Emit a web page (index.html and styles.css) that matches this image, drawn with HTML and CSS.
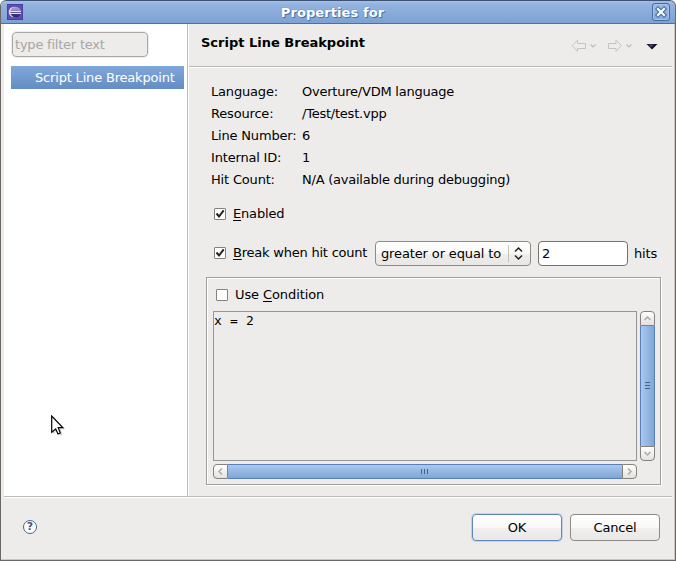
FILE: index.html
```
<!DOCTYPE html>
<html lang="en">
<head>
<meta charset="utf-8">
<title>Properties for</title>
<link rel="stylesheet" href="styles.css">
</head>
<body>
<div class="window">
  <header class="titlebar">
    <svg class="app-icon" width="16" height="16" viewBox="0 0 16 16">
      <defs><linearGradient id="orb" x1="0" y1="0" x2="0" y2="1"><stop offset="0" stop-color="#aaa2cf"/><stop offset=".45" stop-color="#8a84b8"/><stop offset=".6" stop-color="#453a80"/><stop offset="1" stop-color="#2c2260"/></linearGradient></defs>
      <rect x=".5" y=".5" width="15" height="15" fill="#5d4db4" stroke="#4c3ea2"/>
      <circle cx="7" cy="8" r="5.300" fill="#dccfe0"/>
      <circle cx="8.700" cy="8" r="5.300" fill="url(#orb)"/>
      <path d="M3 7.500h11M3 9.500h11" stroke="#dfe0f2"/>
    </svg>
    <h1 class="title"><span>Properties for</span></h1>
    <button class="close" aria-label="Close"><svg width="12" height="12" viewBox="0 0 12 12"><path d="M3 3l6 6M9 3l-6 6" stroke="#3d6296" stroke-width="4.2" stroke-linecap="square"/><path d="M3 3l6 6M9 3l-6 6" stroke="#f4f7fc" stroke-width="2.3" stroke-linecap="square"/></svg></button>
  </header>
  <main class="body">
    <nav class="side">
      <input class="filter" placeholder="type filter text" aria-label="Filter">
      <div class="item"><span>Script Line Breakpoint</span></div>
    </nav>
    <section class="page">
      <div class="page-head">
        <h2><span>Script Line Breakpoint</span></h2>
        <svg width="90" height="14" viewBox="0 0 90 14" fill="none">
          <path d="M1.200 6.500L6.500 1.200V4.500H14.500V9.500H6.500V12.300Z" stroke="#c3c3c1"/>
          <path d="M19.500 5.500l2.500 2.500L24.500 5.500" stroke="#bbb" stroke-width="1.200"/>
          <path d="M50.300 6.500L45 1.200V4.500H37.500V9.500H45V12.300Z" stroke="#c3c3c1"/>
          <path d="M55.500 5.500l2.500 2.500L60.500 5.500" stroke="#bbb" stroke-width="1.200"/>
          <path d="M75.500 5H86.500L81 10.500Z" fill="#111022"/><path d="M77.500 5.500H83L80 8.500Z" fill="#4b3f78"/>
        </svg>
      </div>
      <div class="content">
        <dl class="facts">
          <dt>Language:</dt><dd>Overture/VDM language</dd>
          <dt>Resource:</dt><dd>/Test/test.vpp</dd>
          <dt>Line Number:</dt><dd>6</dd>
          <dt>Internal ID:</dt><dd>1</dd>
          <dt>Hit Count:</dt><dd>N/A (available during debugging)</dd>
        </dl>
        <div class="row enabled">
          <span class="check"><svg width="10" height="10" viewBox="1 1 10 10"><path d="M2.500 5.500L5 8.500L9.700 2.300" fill="none" stroke="#222" stroke-width="2"/></svg></span>
          <span><u>E</u>nabled</span>
        </div>
        <div class="row hitrow">
          <div class="row hitcheck">
            <span class="check"><svg width="10" height="10" viewBox="1 1 10 10"><path d="M2.500 5.500L5 8.500L9.700 2.300" fill="none" stroke="#222" stroke-width="2"/></svg></span>
            <span class="break-label"><u>B</u>reak when hit count</span>
          </div>
          <div class="combo"><span>greater or equal to</span><svg width="22" height="17" viewBox="0 0 22 17" fill="none"><path d="M.5 0V17" stroke="#c4c2bf"/><path d="M7 6.500L10.500 3L14 6.500M7 10.500L10.500 14L14 10.500" stroke="#222" stroke-width="1.500"/></svg></div>
          <input class="count" value="2" aria-label="Hit count">
          <span>hits</span>
        </div>
        <div class="group">
          <div class="row condition"><span class="check"></span><span>Use <u>C</u>ondition</span></div>
          <div class="editor">
            <div class="code">x = 2</div>
            <div class="bar vertical">
              <span class="arrow"><svg width="9" height="9" viewBox="0 0 9 9"><path d="M1.500 6L4.500 3L7.500 6"/></svg></span>
              <span class="thumb"><i></i><i></i><i></i></span>
              <span class="arrow"><svg width="9" height="9" viewBox="0 0 9 9"><path d="M1.500 3L4.500 6L7.500 3"/></svg></span>
            </div>
            <div class="bar horizontal">
              <span class="arrow"><svg width="9" height="9" viewBox="0 0 9 9"><path d="M6 1.500L3 4.500L6 7.500"/></svg></span>
              <span class="thumb"><i></i><i></i><i></i></span>
              <span class="arrow"><svg width="9" height="9" viewBox="0 0 9 9"><path d="M3 1.500L6 4.500L3 7.500"/></svg></span>
            </div>
          </div>
        </div>
      </div>
    </section>
  </main>
  <footer class="footer">
    <span class="help">?</span>
    <button class="btn primary">OK</button>
    <button class="btn">Cancel</button>
  </footer>
</div>
<svg class="cursor" width="16" height="22" viewBox="0 0 16 22"><path d="M1.500 1.500V17.200L5.200 14L8 19.200L10 18.300L7.600 12.700H12.300Z" fill="none" stroke="#999" stroke-opacity=".5" transform="translate(1 1)"/><path d="M.7 1V17.200L4.700 14L7 19L9.300 18L7.200 12.700H11.800Z" fill="#fff" stroke="#000" stroke-width="1.200"/></svg>
</body>
</html>
```
FILE: styles.css
```
* { box-sizing: border-box; }
body { margin: 0; background: #fff; color: #000; font: 13px/16px "DejaVu Sans", sans-serif; letter-spacing: -.18px; overflow: hidden; }
h1, h2, dl, dd { margin: 0; font-size: 13px; }
svg { display: block; flex: none; }
button, input { font: inherit; color: inherit; letter-spacing: inherit; padding: 0; }
.window { width: 676px; height: 561px; display: flex; flex-direction: column; border: 1px solid #6b6764; border-top: 0; border-radius: 6px 6px 0 0; background: #edeceb; overflow: hidden; box-shadow: inset -1px -1px #c9c6c4; }
.titlebar { height: 24px; margin: 0 -1px; flex: none; display: flex; align-items: center; padding: 0 5px 0 7px; border: 1px solid #3f5f8d; border-top-color: #3c5374; border-bottom-color: #4a70a8; border-left: 0; border-radius: 6px 6px 0 0; background: linear-gradient(#a4c0ea, #93b3e0 15%, #7ca2d3); }
.title { flex: 1; text-align: center; color: #fff; text-shadow: 1px 1px #4a70a8, 0 0 1px #4a70a8; padding: 1px 10px 0 0; white-space: nowrap; letter-spacing: .08px; }
.close { width: 18px; height: 18px; border: 1px solid #466b9f; border-radius: 3px; background: linear-gradient(#9bbae5, #86a9d9); display: grid; place-items: center; box-shadow: inset 0 0 0 1px #a9c3e8; }
.body { flex: 1; min-height: 0; display: flex; margin: 0 3px; }
.side { width: 184px; background: #fff; border-right: 1px solid #bcbab8; padding: 8px 3px 0 8px; }
.filter { display: block; width: 136px; height: 25px; border: 1px solid #aaa7a4; border-radius: 4px; background: #edeceb; padding: 0 2px; outline: 1px solid #eeedeb; }
.filter::placeholder { color: #a8a6a4; opacity: 1; letter-spacing: -.22px; }
.item { height: 23px; margin: 9px 0 0 -1px; padding: 4px 0 0 24px; color: #fff; background: linear-gradient(#80a7da, #638dc3); white-space: nowrap; }
.page { flex: 1; border-left: 1px solid #fff; }
.page-head { height: 44px; border-bottom: 1px solid #fff; box-shadow: inset 0 -1px #bcbab8; display: flex; justify-content: space-between; padding: 15px 11px 0 12px; }
.page-head h2 { line-height: 8px; letter-spacing: 0; }
.content { padding: 13px 11px 0 17px; }
.facts { display: grid; grid-template-columns: 91px 1fr; grid-auto-rows: 22px; padding-left: 5px; white-space: nowrap; }
.facts dt, .facts dd { line-height: 22px; }
.facts dd { letter-spacing: -.23px; }
.row { display: flex; align-items: center; white-space: nowrap; }
.check { width: 12px; height: 12px; flex: none; border: 1px solid #85817e; background: #fff; display: grid; place-items: center; margin-right: 7px; border-radius: 1px; }
u { text-underline-offset: 2px; text-decoration-thickness: 1px; }
.enabled { margin: 15px 0 0 8px; height: 16px; }
.hitrow { height: 25px; margin: 19px 0 0 8px; }
.hitcheck { padding-bottom: 2px; }
.break-label { width: 142px; letter-spacing: -.22px; }
.combo { width: 156px; height: 25px; border: 1px solid #8e8a86; border-radius: 4px; background: linear-gradient(#fff, #f8f8f7 50%, #efeeed 51%, #e8e7e5); padding-left: 5px; display: flex; align-items: center; justify-content: space-between; letter-spacing: -.13px; }
.count { width: 90px; height: 25px; border: 1px solid #75716e; border-radius: 4px; margin: 0 6px 0 7px; padding-left: 3px; background: #fff; }
.group { width: 455px; height: 208px; margin-top: 11px; border: 1px solid #a09e9b; box-shadow: inset 1px 1px #fff, 1px 1px #fff; padding: 9px 5px 5px 6px; }
.condition { height: 16px; padding-left: 3px; letter-spacing: -.1px; }
.editor { display: grid; grid-template: 150px 15px / 424px 15px; gap: 3px; margin-top: 8px; }
.code { border: 1px solid #999693; padding: 1px 0 0; font-family: "DejaVu Sans Mono", monospace; white-space: pre; letter-spacing: .17px; }
.bar { display: flex; }
.vertical { flex-direction: column; }
.arrow { flex: 0 0 15px; display: grid; place-items: center; border: 1px solid #85817d; background: linear-gradient(#fff, #e3e1df); }
.arrow path { fill: none; stroke: #aaa; stroke-width: 1.500px; }
.thumb { flex: 1; display: flex; align-items: center; justify-content: center; gap: 2px; border: 0 solid #5680b9; background: linear-gradient(#abc7ed, #7fa5d8); }
.thumb i { background: #41648f; }
.vertical .thumb { flex-direction: column; background: linear-gradient(90deg, #abc7ed, #7fa5d8); border-width: 0 1px; padding-bottom: 2px; }
.horizontal .thumb { border-width: 1px 0; padding-right: 2px; }
.vertical i { width: 5px; height: 1px; }
.horizontal i { width: 1px; height: 5px; }
.vertical .arrow:first-child { border-radius: 4px 4px 0 0; }
.vertical .arrow:last-child { border-radius: 0 0 4px 4px; }
.horizontal .arrow:first-child { border-radius: 4px 0 0 4px; }
.horizontal .arrow:last-child { border-radius: 0 4px 4px 0; }
.footer { height: 64px; margin: 0 3px; flex: none; display: flex; align-items: center; border-top: 1px solid #bcbab8; box-shadow: inset 0 1px #fff; padding: 0 12px 2px 19px; gap: 8px; }
.help { width: 14px; height: 14px; border: 1px solid #4a6484; border-radius: 50%; background: #fff; color: #3f5878; font-size: 11px; line-height: 12px; font-weight: bold; letter-spacing: 0; text-align: center; margin: 0 auto 1px 0; }
.btn { width: 90px; height: 27px; border: 1px solid #8e8a86; border-radius: 4px; background: linear-gradient(#fff, #f9f9f8 50%, #f1f0ef 51%, #e9e8e6); }
.primary { border-color: #5f86bd; box-shadow: 0 0 0 1px #c3d2e8; }
.cursor { position: absolute; left: 51px; top: 415px; }
```
